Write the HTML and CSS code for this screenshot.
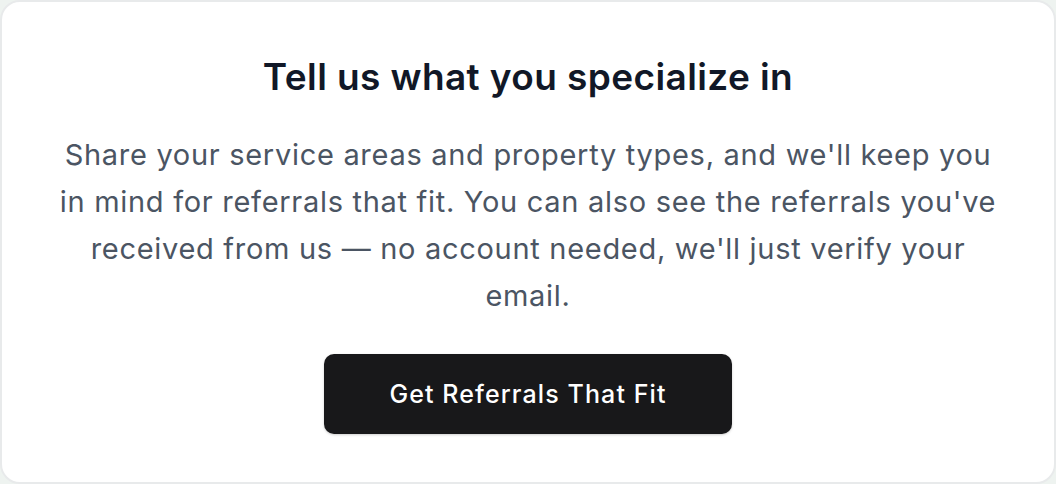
FILE: index.html
```html
<!doctype html>
<html lang="en">
<head>
    <meta charset="utf-8">
    <title>Tell us what you specialize in</title>
    <meta name="viewport" content="width=device-width, initial-scale=1">
    <link rel="stylesheet" href="styles.css">
</head>
<body class="page">
<main class="cta-card">
    <h1 class="cta-title">Tell us what you specialize in</h1>
    <p class="cta-text">Share your service areas and property types, and we'll keep you in mind for referrals that fit. You can also see the referrals you've received from us — no account needed, we'll just verify your email.</p>
    <button type="button" class="cta-button">Get Referrals That Fit</button>
</main>
</body>
</html>
```

FILE: styles.css
```css
html, body {
    height: 100%;
}

.page {
    margin: 0;
    background: #eef3f0;
    font-family: "Inter", "Noto Sans", sans-serif;
    -webkit-font-smoothing: antialiased;
}

.cta-card {
    box-sizing: border-box;
    height: 100%;
    background: #ffffff;
    border: 2px solid #e8eaeb;
    border-radius: 20px;
    padding: 52px 40px 0;
    display: flex;
    flex-direction: column;
    align-items: center;
    text-align: center;
}

.cta-title {
    margin: 0;
    font-size: 37px;
    font-weight: 600;
    line-height: 46px;
    color: #111827;
    letter-spacing: 0.4px;
}

.cta-text {
    margin: 31px 0 0;
    max-width: 952px;
    font-size: 29px;
    line-height: 47px;
    color: #4b5563;
    letter-spacing: 0.7px;
}

.cta-button {
    margin-top: 35px;
    width: 408px;
    height: 80px;
    flex-shrink: 0;
    border: 0;
    border-radius: 10px;
    background: #18181a;
    color: #ffffff;
    font-family: inherit;
    font-size: 25px;
    font-weight: 500;
    letter-spacing: 1.1px;
    cursor: pointer;
    box-shadow: 0 1px 3px rgba(0, 0, 0, 0.12), 0 1px 2px rgba(0, 0, 0, 0.08);
}
```
